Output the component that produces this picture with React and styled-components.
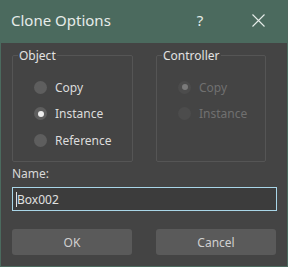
import React from 'react';
import styled, { createGlobalStyle } from 'styled-components';

const Global = createGlobalStyle`
  html, body { margin: 0; padding: 0; background: #4b6a5e; }
  body { font-family: "Noto Sans", "Open Sans", sans-serif; }
`;

const Window = styled.div`
  width: 288px;
  height: 267px;
  box-sizing: border-box;
  background: #4b6a5e;
  padding: 0 1px 1px 1px;
  display: flex;
  flex-direction: column;
`;

const TitleBar = styled.div`
  height: 43px;
  display: flex;
  align-items: center;
  padding-left: 10px;
  color: #e6ece9;
  font-size: 15px;
`;

const Title = styled.div`
  flex: 1;
  margin-top: -3px;
`;

const TitleButton = styled.div`
  width: 58px;
  height: 43px;
  display: flex;
  align-items: center;
  justify-content: center;
  color: #e6ece9;
  font-size: 15px;
  margin-top: -3px;
`;

const Body = styled.div`
  flex: 1;
  background: #444444;
  padding: 4px 10px 0 11px;
  color: #d8d8d8;
  font-size: 12px;
`;

const Groups = styled.div`
  display: flex;
  gap: 23px;
`;

const Group = styled.fieldset`
  margin: 0;
  width: ${p => p.$w}px;
  height: 115px;
  box-sizing: border-box;
  border: 1px solid #555555;
  border-radius: 2px;
  padding: 14px 0 0 21px;
  display: flex;
  flex-direction: column;
  gap: 8.5px;
`;

const Legend = styled.legend`
  padding: 0 1px;
  margin-left: -16px;
  color: #e2e2e2;
  font-size: 12px;
`;

const Option = styled.div`
  display: flex;
  align-items: center;
  gap: 8px;
  height: 18px;
  color: ${p => (p.$disabled ? '#707070' : '#dcdcdc')};
`;

const Radio = styled.span`
  width: 13px;
  height: 13px;
  border-radius: 50%;
  background: ${p => (p.$disabled ? '#4c4c4c' : '#5e5e5e')};
  display: flex;
  align-items: center;
  justify-content: center;
  &::after {
    content: '';
    width: 6px;
    height: 6px;
    border-radius: 50%;
    background: ${p => (p.$disabled ? '#7a7a7a' : '#eeeeee')};
    display: ${p => (p.$checked ? 'block' : 'none')};
  }
`;

const NameLabel = styled.div`
  margin-top: 3px;
  height: 18px;
  line-height: 18px;
`;

const Input = styled.div`
  margin-top: 4px;
  height: 24px;
  box-sizing: border-box;
  border: 1px solid #a9d6e8;
  background: #3c3c3c;
  display: flex;
  align-items: center;
  padding-left: 3px;
  color: #e0e0e0;
  font-size: 12px;
`;

const Caret = styled.span`
  width: 1px;
  height: 15px;
  background: #e0e0e0;
`;

const Buttons = styled.div`
  margin-top: 18px;
  display: flex;
  gap: 24px;
`;

const Button = styled.div`
  width: 120px;
  height: 26px;
  border-radius: 3px;
  background: #5a5a5a;
  color: #d0d0d0;
  display: flex;
  align-items: center;
  justify-content: center;
  font-size: 12px;
`;

export default function App() {
  return (
    <>
      <Global />
      <Window>
        <TitleBar>
          <Title>Clone Options</Title>
          <TitleButton>?</TitleButton>
          <TitleButton>
            <svg width="13" height="13" viewBox="0 0 13 13">
              <path d="M0.5 0.5 L12.5 12.5 M12.5 0.5 L0.5 12.5" stroke="#e6ece9" strokeWidth="1.1" fill="none" />
            </svg>
          </TitleButton>
        </TitleBar>
        <Body>
          <Groups>
            <Group $w={121}>
              <Legend>Object</Legend>
              <Option><Radio />Copy</Option>
              <Option><Radio $checked />Instance</Option>
              <Option><Radio />Reference</Option>
            </Group>
            <Group $w={110}>
              <Legend>Controller</Legend>
              <Option $disabled><Radio $disabled $checked />Copy</Option>
              <Option $disabled><Radio $disabled />Instance</Option>
            </Group>
          </Groups>
          <NameLabel>Name:</NameLabel>
          <Input><Caret />Box002</Input>
          <Buttons>
            <Button>OK</Button>
            <Button>Cancel</Button>
          </Buttons>
        </Body>
      </Window>
    </>
  );
}
